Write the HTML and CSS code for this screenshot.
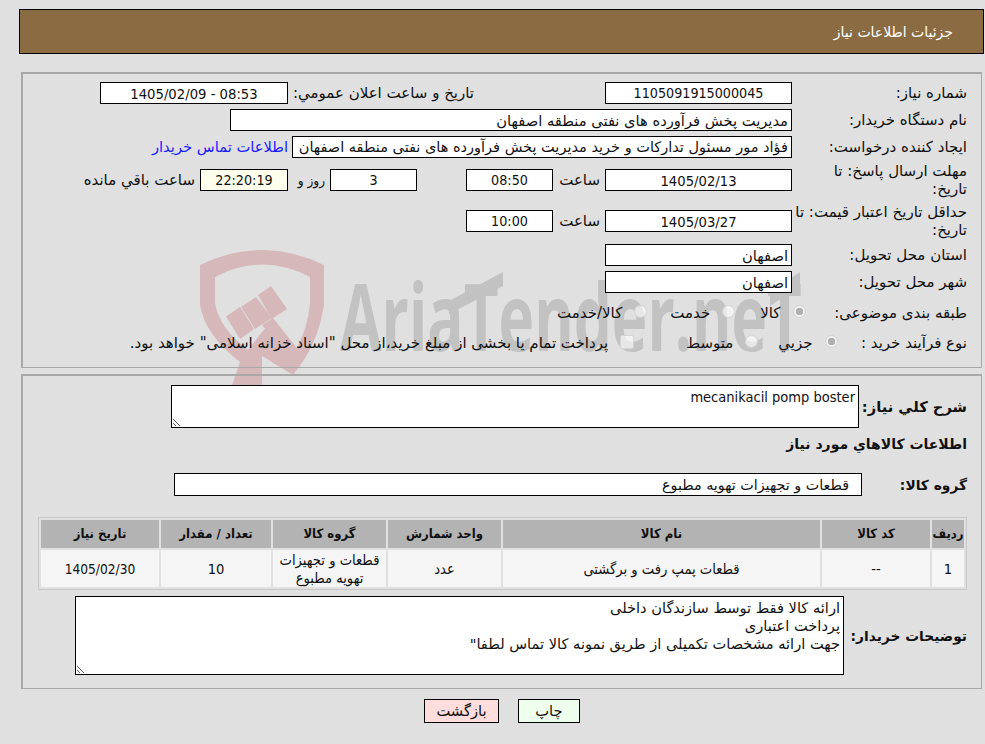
FILE: index.html
```html
<!DOCTYPE html>
<html lang="fa" dir="rtl">
<head>
<meta charset="utf-8">
<title>جزئیات اطلاعات نیاز</title>
<link rel="stylesheet" href="styles.css">
</head>
<body>
<svg class="watermark" width="985" height="744" viewBox="0 0 985 744" aria-hidden="true">
  <g class="wm-red">
    <path fill-rule="evenodd" d="M200 265Q262 235 324 265L324 305Q318 345 293 375L262 356L262 392L232 385L240 362Q205 335 200 305ZM215 277L215 303Q219 328 248 350L270 322L293 355Q308 330 310 303L310 277Q262 252 215 277Z"/>
    <path d="M226 316.5L240 307L254 329L240 339Z"/>
    <path d="M241 307L256 297L272 318L255 329Z"/>
    <path d="M258 295L271 286L287 309L272 319Z"/>
    <path d="M262 325L273 318L300 352L294 362Z"/>
  </g>
  <text class="wm-text" x="340" y="351" textLength="462" lengthAdjust="spacingAndGlyphs">AriaTender.neT</text>
  <path class="wm-grey" d="M449 301L503 272L503 286L449 314Z"/>
  <path class="wm-grey" d="M770 292L800 272L800 286L770 306Z"/>
</svg>

<header class="title-bar"><h1>جزئیات اطلاعات نیاز</h1></header>

<section class="panel panel-info">
  <div class="row row-std">
    <div class="label">شماره نیاز:</div>
    <div class="box w187 center num">1105091915000045</div>
    <div class="announce">تاریخ و ساعت اعلان عمومي:</div>
    <div class="box w188 center num date" dir="ltr">1405/02/09 - 08:53</div>
  </div>
  <div class="row row-std">
    <div class="label">نام دستگاه خریدار:</div>
    <div class="box w562">مدیریت پخش فرآورده های نفتی منطقه اصفهان</div>
  </div>
  <div class="row row-std">
    <div class="label">ایجاد کننده درخواست:</div>
    <div class="box w500">فؤاد مور مسئول تدارکات و خرید مدیریت پخش فرآورده های نفتی منطقه اصفهان</div>
    <a class="contact" href="#">اطلاعات تماس خریدار</a>
  </div>
  <div class="row row-tall row-deadline">
    <div class="label">مهلت ارسال پاسخ: تا تاریخ:</div>
    <div class="box w187 center num date">1405/02/13</div>
    <div class="unit hour">ساعت</div>
    <div class="box w87 center num">08:50</div>
    <div class="box w87 center num days">3</div>
    <div class="unit day-unit">روز و</div>
    <div class="box w88 center num timer">22:20:19</div>
    <div class="unit">ساعت باقي مانده</div>
  </div>
  <div class="row row-tall">
    <div class="label">حداقل تاریخ اعتبار قیمت: تا تاریخ:</div>
    <div class="box w187 center num date">1405/03/27</div>
    <div class="unit hour">ساعت</div>
    <div class="box w87 center num">10:00</div>
  </div>
  <div class="row row-std">
    <div class="label">استان محل تحویل:</div>
    <div class="box w187">اصفهان</div>
  </div>
  <div class="row row-std">
    <div class="label">شهر محل تحویل:</div>
    <div class="box w187">اصفهان</div>
  </div>
  <div class="row row-choice first-choice">
    <div class="label choice-label">طبقه بندی موضوعی:</div>
    <label class="opt"><input type="radio" name="cat" checked disabled><span>کالا</span></label>
    <label class="opt opt-service"><input type="radio" name="cat" disabled><span>خدمت</span></label>
    <label class="opt opt-both"><input type="radio" name="cat" disabled><span>کالا/خدمت</span></label>
  </div>
  <div class="row row-choice">
    <div class="label process-label">نوع فرآیند خرید :</div>
    <label class="opt"><input type="radio" name="proc" checked disabled><span>جزيي</span></label>
    <label class="opt opt-medium"><input type="radio" name="proc" disabled><span>متوسط</span></label>
    <label class="opt opt-treasury"><input type="checkbox" disabled><span>پرداخت تمام یا بخشی از مبلغ خرید،از محل "اسناد خزانه اسلامی" خواهد بود.</span></label>
  </div>
</section>

<section class="panel panel-goods">
  <div class="row desc-row">
    <div class="strong-label">شرح کلي نياز:</div>
    <textarea class="area area-desc" readonly>mecanikacil pomp boster</textarea>
  </div>
  <h2 class="section-title">اطلاعات کالاهاي مورد نياز</h2>
  <div class="row group-row">
    <div class="strong-label">گروه کالا:</div>
    <div class="box group-box">قطعات و تجهیزات تهویه مطبوع</div>
  </div>
  <table class="items">
    <colgroup>
      <col class="c-row"><col class="c-code"><col class="c-name"><col class="c-unit"><col class="c-group"><col class="c-qty"><col class="c-date">
    </colgroup>
    <thead>
      <tr><th>ردیف</th><th>کد کالا</th><th>نام کالا</th><th>واحد شمارش</th><th>گروه کالا</th><th>تعداد / مقدار</th><th>تاریخ نیاز</th></tr>
    </thead>
    <tbody>
      <tr><td>1</td><td>--</td><td>قطعات پمپ رفت و برگشتی</td><td>عدد</td><td>قطعات و تجهیزات تهویه مطبوع</td><td>10</td><td class="cell-date">1405/02/30</td></tr>
    </tbody>
  </table>
  <div class="row notes-row">
    <div class="strong-label">توضیحات خریدار:</div>
    <textarea class="area area-notes" readonly>ارائه کالا فقط توسط سازندگان داخلی
پرداخت اعتباری
جهت ارائه مشخصات تکمیلی از طریق نمونه کالا تماس لطفا"</textarea>
  </div>
</section>

<div class="actions">
  <button class="btn btn-print" type="button">چاپ</button>
  <button class="btn btn-back" type="button">بازگشت</button>
</div>
</body>
</html>
```

FILE: styles.css
```css
* { box-sizing: border-box; }
html, body { margin: 0; padding: 0; }
body {
  position: relative;
  width: 985px;
  height: 744px;
  overflow: hidden;
  background: #e0e0e0;
  color: #111;
  font-family: "DejaVu Sans", sans-serif;
  font-size: 14.7px;
  line-height: 18px;
  direction: rtl;
}
.num {
  font-family: "DejaVu Sans Condensed", "DejaVu Sans", sans-serif;
  font-stretch: condensed;
  font-size: 14.2px;
}
.date { font-size: 14.7px; }
.watermark { position: absolute; left: 0; top: 0; z-index: -1; direction: ltr; }
.wm-red { fill: #d7b8ba; }
.wm-grey { fill: #c2c2c2; }
.wm-text { font-family: "Open Sans", sans-serif; font-weight: 700; font-size: 94px; fill: #c2c2c2; direction: ltr; }

.title-bar {
  margin: 9px 1px 0 19px;
  height: 45px;
  background: #8b6b41;
  border: 1px solid #000;
  padding: 0 30px 0 0;
  display: flex;
  align-items: center;
  color: #fff;
}
.title-bar h1 { margin: 0; font-size: 14px; font-weight: 400; }

.panel {
  margin-left: 21px;
  margin-right: 3px;
  border: 1px solid #a8a8a8;
  border-top-width: 2px;
  border-left-width: 2px;
  padding-right: 14px;
}
.panel-info { margin-top: 18px; height: 296px; padding-top: 8px; }
.panel-goods { margin-top: 6px; height: 315px; padding-top: 9px; }

.row { display: flex; align-items: center; }
.row-std { height: 22px; margin-bottom: 5px; }
.row-tall { height: 36px; margin-bottom: 5px; }
.row-deadline { margin-top: -1px; }
.row-deadline .label { padding-left: 20px; }
.label { width: 175px; flex: none; padding-left: 0; font-size: 15px; }
.box {
  flex: none;
  height: 22px;
  border: 1px solid #000;
  background: #fff;
  padding: 1px 3px 0;
  line-height: 19px;
  white-space: nowrap;
  overflow: hidden;
}
.center { text-align: center; }
.w187 { width: 187px; }
.w188 { width: 188px; }
.w562 { width: 562px; }
.w500 { width: 500px; padding-right: 3px; font-size: 14.5px; }
.w88 { width: 88px; }
.w87 { width: 87px; }
.announce { flex: none; width: 186px; margin-right: 131px; font-size: 15px; white-space: nowrap; }
.contact { margin-right: 4px; color: #1a1aff; text-decoration: none; white-space: nowrap; }
.unit { margin-right: 5px; white-space: nowrap; font-size: 15px; }
.hour { flex: none; width: 47px; }
.days { margin-right: 49px; }
.day-unit {
  flex: none;
  width: 37px;
  font-family: "DejaVu Sans Condensed", "DejaVu Sans", sans-serif;
  font-stretch: condensed;
  font-size: 13.5px;
}
.timer { background: #ffffee; }

.row-choice { height: 24px; margin-bottom: 6px; }
.first-choice { margin-top: 8px; }
.choice-label { width: 161.5px; padding: 0; white-space: nowrap; }
.process-label { width: 129.5px; padding: 0; white-space: nowrap; }
.opt { display: flex; align-items: center; white-space: nowrap; gap: 12px; font-size: 15px; }
.opt input {
  appearance: none;
  -webkit-appearance: none;
  flex: none;
  width: 13px;
  height: 13px;
  margin: -3px 0 0;
  border: 1px solid #d4d4d4;
  border-radius: 50%;
  background: rgba(255,255,255,.6);
}
.opt input:checked { background: radial-gradient(circle, #b0b0b0 0 3.5px, #f0f0f0 4px); }
.opt input[type=checkbox] { width: 14px; height: 14px; border-radius: 2px; }
.opt-service { margin-right: 25px; }
.opt-both { margin-right: 23px; }
.opt-medium { margin-right: 20px; }
.opt-treasury { margin-right: 52px; }

.strong-label { font-weight: 700; white-space: nowrap; font-size: 13.8px; }
.desc-row { height: 43px; }
.desc-row .strong-label { width: 108px; font-size: 14.7px; }
.area {
  flex: none;
  display: block;
  border: 1px solid #000;
  background: #fff;
  color: #111;
  font: inherit;
  line-height: 18px;
  padding: 2px 3px;
  direction: rtl;
  outline: none;
}
.area-desc { width: 688px; height: 43px; font-family: "DejaVu Sans Condensed", "DejaVu Sans", sans-serif; font-stretch: condensed; font-size: 14.5px; }
.section-title { margin: 7px 0 0; font-size: 14px; line-height: 18px; font-weight: 700; }
.group-row { margin-top: 20px; height: 23px; }
.group-row .strong-label { width: 105px; }
.group-box { width: 688px; height: 23px; padding: 1px 12px 0; line-height: 20px; font-size: 14.3px; }
.items {
  margin-top: 21px;
  width: 929px;
  table-layout: fixed;
  border-collapse: separate;
  border-spacing: 2px;
  border: 1px solid #c8c8c8;
  font-family: "DejaVu Sans Condensed", "DejaVu Sans", sans-serif;
  font-stretch: condensed;
}
.items th, .items td { text-align: center; padding: 0; }
.items th { height: 28px; background: #b3b3b3; font-weight: 700; font-size: 13px; }
.items td { height: 37px; background: #f5f5f5; font-size: 14.6px; }
.items td.cell-date { font-size: 13.6px; }
.c-row { width: 32px; } .c-code { width: 108px; } .c-name { width: 317px; } .c-unit { width: 113px; }
.c-group { width: 113px; } .c-qty { width: 110px; } .c-date { width: 118px; }
.notes-row { margin-top: 6px; height: 79px; }
.notes-row .strong-label { width: 123px; }
.area-notes { width: 769px; height: 79px; font-size: 14.6px; }

.actions { margin-top: 10px; display: flex; justify-content: center; gap: 19px; padding-left: 19px; }
.btn {
  height: 24px;
  border: 1px solid #000;
  font: inherit;
  color: #111;
  padding: 0;
}
.btn-print { width: 62px; background: #eeffee; }
.btn-back { width: 75px; background: #ffdddd; }
```
